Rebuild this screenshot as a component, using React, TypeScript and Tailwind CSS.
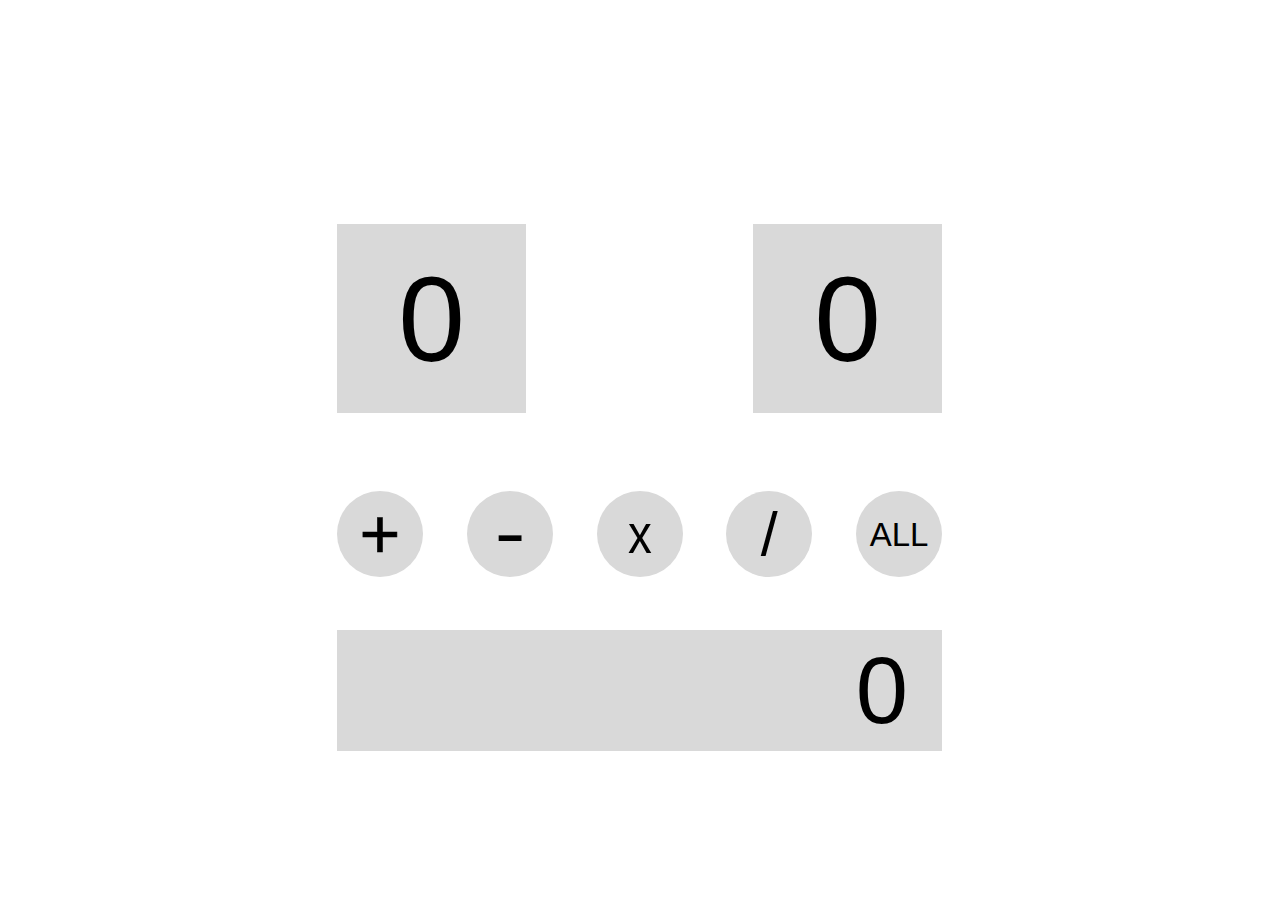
import { useState } from 'react'

type Op = '+' | '-' | 'x' | '/' | 'ALL'

const ops: { op: Op; className: string }[] = [
  { op: '+', className: 'text-[70px] [-webkit-text-stroke:0.6px_black]' },
  { op: '-', className: 'text-[72px] pb-[4px] scale-x-[1.3]' },
  { op: 'x', className: 'text-[56px] scale-x-[0.85]' },
  { op: '/', className: 'text-[61px]' },
  { op: 'ALL', className: 'text-[33px]' },
]

export default function App() {
  const [a, setA] = useState(0)
  const [b, setB] = useState(0)
  const [result, setResult] = useState<number | string>(0)

  const run = (op: Op) => {
    if (op === '+') setResult(a + b)
    if (op === '-') setResult(a - b)
    if (op === 'x') setResult(a * b)
    if (op === '/') setResult(b === 0 ? 0 : a / b)
    if (op === 'ALL') {
      setA(0)
      setB(0)
      setResult(0)
    }
  }

  return (
    <main className="flex min-h-screen justify-center bg-white pr-px font-['Liberation_Sans',Arial,sans-serif] text-black">
      <div className="w-[605px] pt-[224px]">
        {/* Inputs */}
        <div className="flex justify-between">
          <button
            onClick={() => setA(a + 1)}
            className="flex h-[189px] w-[189px] items-center justify-center bg-[#d9d9d9] text-[120px] leading-none"
          >
            {a}
          </button>
          <button
            onClick={() => setB(b + 1)}
            className="flex h-[189px] w-[189px] items-center justify-center bg-[#d9d9d9] text-[120px] leading-none"
          >
            {b}
          </button>
        </div>

        {/* Operators */}
        <div className="mt-[78px] flex justify-between">
          {ops.map(({ op, className }) => (
            <button
              key={op}
              onClick={() => run(op)}
              className="flex h-[86px] w-[86px] items-center justify-center rounded-full bg-[#d9d9d9]"
            >
              <span className={`leading-none ${className}`}>{op}</span>
            </button>
          ))}
        </div>

        {/* Result */}
        <div className="mt-[53px] flex h-[121px] items-center justify-end bg-[#d9d9d9] pr-[34px] text-[94px] leading-none">
          {result}
        </div>
      </div>
    </main>
  )
}
